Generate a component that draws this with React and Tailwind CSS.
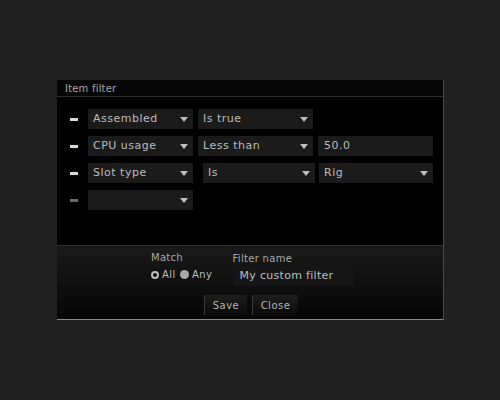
import React from 'react';

const font = { fontFamily: '"DejaVu Sans", "Liberation Sans", sans-serif' };

function Arrow() {
  return (
    <svg width="8" height="5" viewBox="0 0 8 5" className="shrink-0">
      <polygon points="0,0 8,0 4,5" fill="#bdbdbd" />
    </svg>
  );
}

function Select({ label, className }) {
  return (
    <div className={`h-5 bg-[#1b1b1b] flex items-center justify-between pl-[5px] pr-[5px] ${className}`}>
      <span className="text-[11px] text-[#bcbcbc] tracking-[0.5px]">{label}</span>
      <Arrow />
    </div>
  );
}

function Dash({ dim }) {
  return (
    <div className="w-[31px] shrink-0 pl-[13px] flex items-center">
      <div className={`w-[8px] h-[3px] ${dim ? 'bg-[#6a6a6a]' : 'bg-[#d8d8d8]'}`} />
    </div>
  );
}

export default function App() {
  return (
    <div className="w-[500px] h-[400px] bg-[#202020] pt-[80px] pl-[57px]" style={font}>
      <div className="w-[387px] h-[240px] bg-black flex flex-col border-r border-r-[#4a4a4a] border-b border-b-[#8a8a8a]">
        <div className="h-[17px] bg-[#070707] border-b border-[#303030] flex items-center pl-[8px]">
          <span className="text-[10px] text-[#a8a8a8] tracking-[0.2px]">Item filter</span>
        </div>
        <div className="flex-1 pt-[12px] flex flex-col gap-[7px]">
          <div className="flex items-center h-5">
            <Dash />
            <Select label="Assembled" className="w-[105px]" />
            <Select label="Is true" className="ml-[5px] w-[115px]" />
          </div>
          <div className="flex items-center h-5">
            <Dash />
            <Select label="CPU usage" className="w-[105px]" />
            <Select label="Less than" className="ml-[5px] w-[115px]" />
            <div className="ml-[5px] w-[115px] h-5 bg-[#1b1b1b] flex items-center pl-[6px]">
              <span className="text-[11px] text-[#bcbcbc] tracking-[0.5px]">50.0</span>
            </div>
          </div>
          <div className="flex items-center h-5">
            <Dash />
            <Select label="Slot type" className="w-[105px]" />
            <Select label="Is" className="ml-[10px] w-[112px]" />
            <Select label="Rig" className="ml-[4px] w-[114px]" />
          </div>
          <div className="flex items-center h-5">
            <Dash dim />
            <Select label="" className="w-[105px]" />
          </div>
        </div>
        <div className="h-[74px] border-t border-[#2e2e2e] bg-gradient-to-b from-[#1a1a1a] to-[#060606] flex flex-col">
          <div className="flex pt-[4px]">
            <div className="ml-[94px] flex flex-col">
              <span className="text-[10px] text-[#a8a8a8] tracking-[0.3px]">Match</span>
              <div className="flex items-center mt-[2px] gap-[3px]">
                <div className="w-[8px] h-[8px] rounded-full border-[2px] border-[#bdbdbd]" />
                <span className="text-[10px] text-[#bcbcbc] tracking-[0.5px]">All</span>
                <div className="w-[9px] h-[9px] rounded-full bg-[#a8a8a8] ml-[1px]" />
                <span className="text-[10px] text-[#bcbcbc] tracking-[0.5px]">Any</span>
              </div>
            </div>
            <div className="ml-[20px] flex flex-col pt-[1px]">
              <span className="text-[10px] text-[#a8a8a8] tracking-[0.3px]">Filter name</span>
              <div className="w-[120px] h-5 bg-[#161616] flex items-center pl-[7px]">
                <span className="text-[11px] text-[#bcbcbc] tracking-[0.3px]">My custom filter</span>
              </div>
            </div>
          </div>
          <div className="flex mt-[9px] ml-[147px] gap-[5px]">
            <div className="w-[43px] h-5 bg-gradient-to-b from-[#1e1e1e] to-[#0a0a0a] border-l border-[#3a3a3a] flex items-center justify-center">
              <span className="text-[10px] text-[#b4b4b4] tracking-[0.5px]">Save</span>
            </div>
            <div className="w-[46px] h-5 bg-gradient-to-b from-[#1e1e1e] to-[#0a0a0a] border-l border-[#3a3a3a] flex items-center justify-center">
              <span className="text-[10px] text-[#b4b4b4] tracking-[0.5px]">Close</span>
            </div>
          </div>
        </div>
      </div>
    </div>
  );
}
